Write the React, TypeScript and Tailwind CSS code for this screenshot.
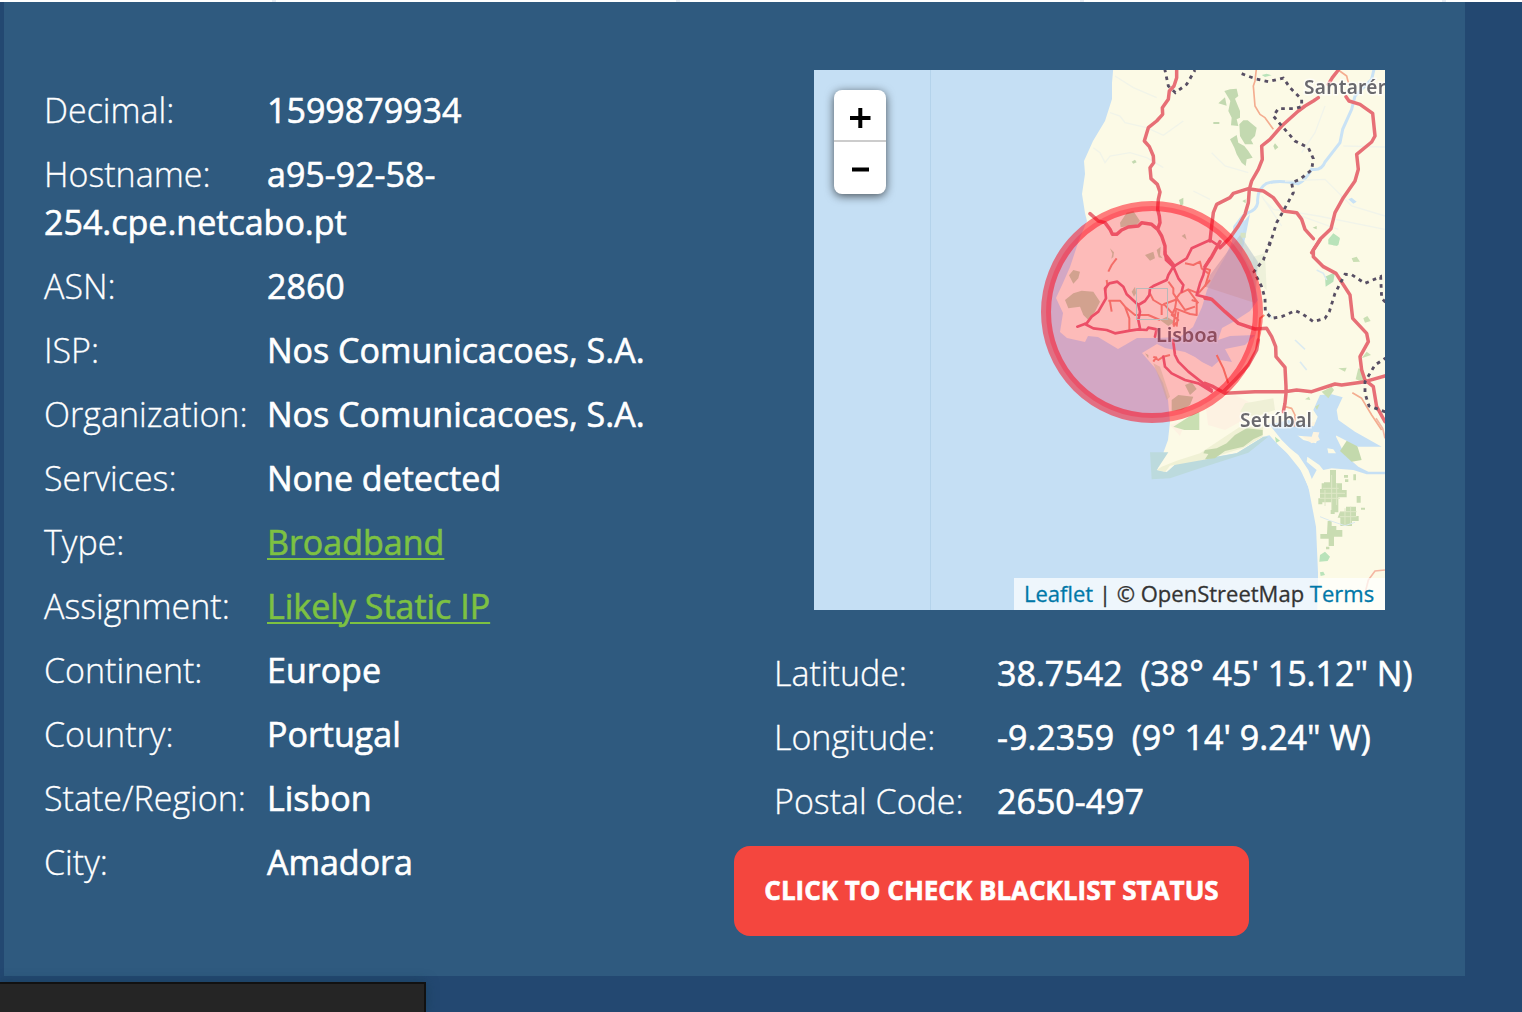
import React from "react";

type Row = { label: string; value: string; link?: boolean };

const details: Row[] = [
  { label: "Decimal:", value: "1599879934" },
  { label: "Hostname:", value: "a95-92-58-254.cpe.netcabo.pt" },
  { label: "ASN:", value: "2860" },
  { label: "ISP:", value: "Nos Comunicacoes, S.A." },
  { label: "Organization:", value: "Nos Comunicacoes, S.A." },
  { label: "Services:", value: "None detected" },
  { label: "Type:", value: "Broadband", link: true },
  { label: "Assignment:", value: "Likely Static IP", link: true },
  { label: "Continent:", value: "Europe" },
  { label: "Country:", value: "Portugal" },
  { label: "State/Region:", value: "Lisbon" },
  { label: "City:", value: "Amadora" },
];

const position: Row[] = [
  { label: "Latitude:", value: "38.7542\u00a0 (38° 45' 15.12\" N)" },
  { label: "Longitude:", value: "-9.2359\u00a0 (9° 14' 9.24\" W)" },
  { label: "Postal Code:", value: "2650-497" },
];

function InfoRow({ label, value, link }: Row) {
  return (
    <p className="mb-4 text-[34px] leading-[48px] text-white">
      <span className="inline-block w-[223px] font-light [-webkit-text-stroke:0.3px]">{label}</span>
      {link ? (
        <a className="font-medium text-[#7dc142] underline decoration-2 underline-offset-[3px] [-webkit-text-stroke:0.6px]">
          {value}
        </a>
      ) : (
        <span className="font-medium [-webkit-text-stroke:0.6px]">{value}</span>
      )}
    </p>
  );
}

/* Each group below is one map tile sector drawn at three times its displayed size. */
const NW = "translate(1030 66) scale(.33333)";
const NE = "translate(1205 66) scale(.33333)";
const SW = "translate(1030 240) scale(.33333)";
const SE = "translate(1205 240) scale(.33333)";
const SOUTH = "translate(1140 420) scale(.33333)";

function MapArt() {
  return (
    <svg className="block h-[540px] w-[571px]" viewBox="814 70 571 540">
      <rect x="814" y="70" width="571" height="540" fill="#c5dff4" />
      <path d="M930.500 70V610" stroke="#b4d3eb" />

      <g className="blur-[0.5px]">
        {/* Land */}
        <path
          fill="#fcfae6"
          d="M1114 60L1112 83L1112 99L1105 121L1093 141L1084 161L1085 174L1082 194L1085 213L1087 221L1079 240L1070 267L1063 283L1056 298L1063 313L1060 332L1067 338L1085 342L1088 336L1098 337L1118 349L1125 345L1137 338L1157 338L1180 337L1193 327L1202 307L1207 290L1212 280L1225 257L1238 229L1250 214L1246 234L1242 253L1253 273L1258 300L1250 311L1233 322L1222 328L1218 340L1230 336L1255 335L1245 345L1225 349L1232 362L1220 360L1212 367L1202 362L1195 357L1185 352L1165 348L1157 344L1142 353L1155 368L1163 383L1168 400L1170 422L1168 440L1157 470L1167 472L1177 463L1203 459L1237 453L1263 437L1270 435L1287 453L1303 473L1313 500L1318 533L1318 580L1317 620H1395V60Z"
        />
        {/* Built-up areas */}
        <path d="M1205 400L1235 395L1255 405L1247 418L1225 430L1208 425ZM1170 425L1186 420L1180 436ZM1296 424L1318 428L1325 443L1310 440Z" fill="#fdf2e2" />
        <g transform={SOUTH}>
          <path d="M30 97L85 97L50 150L80 157L110 130L190 118L290 100L370 50L385 50L325 98L180 145L90 175L35 178Z" fill="#bcdadd" />
          <path d="M180 100L300 20L370 20L368 50L310 84L200 118L90 137L75 156L50 150L65 140L110 122Z" fill="#f0f1d5" />
          <path d="M195 90L230 85L260 70L285 45L320 25L368 30L368 45L340 58L310 80L255 93L225 115L195 118L205 102L190 100Z" fill="#c3d6aa" />
          <path d="M385 10L440 20L490 60L528 70L545 15L570 0H596L588 50L615 105L655 140L685 155H750V163H680L640 150L575 145L550 150L538 135L502 110L500 125L530 150L514 180L495 145L470 105L425 60Z" fill="#c5dff4" />
          <path d="M385 42L400 36L430 70L475 105L505 150L540 240L550 320L545 480H535L528 320L505 200L470 125L415 75Z" fill="#fcfae6" />
          <path d="M460 20L510 8L555 0L545 20L525 30L540 60L515 70L490 52Z" fill="#fdf4df" />
          <path d="M562 85L580 88L588 100L565 100Z" fill="#fcfae6" />
          <path d="M625 55L648 65L665 120L635 125L600 93Z" fill="#c3d9ac" />
          <g fill="#c9dcb2">
            <path d="M570 150h18v40h18v20h14v22h-25v45h-20v-30h-35v-40h12v-20h18ZM600 275h18v-15h30v28h8v15h-20v15h-35v-25h-8ZM563 303h12v15h14v12h18v20h-25v28h-16v-22h-25v-14h20ZM612 165h12v8h-12ZM640 163h8v18h-8ZM615 178h10v8h-10ZM650 228h12v20h-12ZM663 263h12v6h-12ZM558 380h10v8h-10Z" />
            <path d="M545 190h15v20h-15ZM590 215h18v15h-18ZM535 235h12v18h-12ZM572 270h12v12h-12Z" />
          </g>
          <path d="M548 205h48M540 220h75M540 235h60M575 165v105M590 190v65M555 210v48M600 275h50M600 290h50M615 265v50M632 260v50" stroke="#dfe8c7" strokeWidth="3" />
          <path d="M540 405L555 395L570 410L563 423L538 425ZM540 457L550 455L555 465L542 468Z" fill="#b9e3ba" />
          <path d="M405 50l15 12-12 6" fill="#b9e3ba" />
          <path d="M708 -5L728 25L735 55M735 450L705 453L685 480L675 520" fill="none" stroke="#f4b7a3" strokeWidth="5" />
          <path d="M540 290l30 12 45 15 30-10" fill="none" stroke="#dbe9ef" strokeWidth="3" />
        </g>
        <g transform={SE}>
          <path d="M345 465L380 463L413 472L395 510L400 540L450 575L530 620L460 620L380 580L320 575L338 530L325 510Z" fill="#c5dff4" />
          <path d="M120 490L205 475L210 510L150 530L105 515Z" fill="#eff0d6" />
          <path d="M190 555L250 540L330 560L320 590L250 585Z" fill="#c5dff4" />
          <path d="M145 50L180 40L185 150L165 130L140 80Z" fill="#eef1da" />
          <path d="M360 110L390 97L385 125L362 140ZM370 0L405 -5L400 15L385 16Z" fill="#b8e1b8" />
          <path d="M350 455L380 440L387 450L370 475ZM470 355L485 335L498 345ZM452 418L460 385L475 390L480 428ZM400 385L425 383L420 395ZM440 55L455 50L465 65L445 66ZM475 235L487 228L497 243L480 248ZM300 478l12-8 4 10ZM330 500l14-8-8 18Z" fill="#cadfb4" />
          <path d="M335 90l20 10 10 20M270 300l30 28M285 365l20 25M190 215l10 20" fill="none" stroke="#dcebf1" strokeWidth="5" />
        </g>
        <g transform={SW}>
          <path d="M430 560l55-35 23-10v55h-45Z" fill="#c9dfb2" />
        </g>

        {/* Woods and streams */}
        <g transform={NE}>
          <path d="M58 75L75 70L95 68L100 90L90 98L105 135L105 155L95 160L100 180L78 178L80 155L70 135L76 105ZM40 112l20-18 5 25ZM103 175L115 163L128 163L155 185L150 210L138 222L145 235L120 235L105 210ZM75 220L95 207L100 230L118 240L130 255L143 275L125 280L122 300L110 290L95 265L88 245ZM25 168h18v6H25ZM205 240l5-8 10 12-10 8ZM323 485l12-5v10ZM112 405l10-5v12Z" fill="#c3d9b0" />
          <path d="M170 27l15-4 15 5-20 5ZM370 520L385 502L404 515L397 540L370 535Z" fill="#b9e3ba" />
          <path d="M90 490Q105 450 130 440Q155 430 158 410Q155 370 185 352Q220 340 280 353Q300 345 320 310Q350 315 360 288L405 230L413 190L440 130L450 90L500 40L508 5" fill="none" stroke="#c9e2f5" strokeWidth="9" />
          <path d="M85 480L105 455L120 465L105 540H80ZM430 400l10-5 15 12-10 6Z" fill="#c9e2f5" />
          <path d="M20 260L60 300L130 320M240 345L360 340L440 420L540 450M175 400L205 430L260 440L400 490M415 240L540 243M215 430L340 450L540 490M360 120l-30 80-40 60M170 390l60 90" fill="none" stroke="#f1f4ea" strokeWidth="4" />
          <path d="M107 500h15v15h-10v20h-10Z" fill="#d5e3c2" />
        </g>
        <g transform={NW} fill="none" stroke="#f1f4e9" strokeWidth="4">
          <path d="M240 140L270 150L285 170L350 185L400 208L460 165M190 245L210 260L225 290L240 270L300 260L350 275L400 305M255 30L310 65L380 95M490 375L540 400" />
          <path d="M305 287l10-6 5 8-10 4ZM447 402l13-7v20l-8 5ZM270 470l20-30 20-5 20 30-10 12-48 7ZM455 510l10-7 5 18Z" fill="#c3d9b0" stroke="none" />
        </g>
        <g transform={SW} fill="#c3d9ae">
          <path d="M130 90l20 5-5 20-15 16-13-25ZM105 180l25-20 25-8 35 3 20 30-15 30-20 25-15-15-10-25-35 5ZM240 25l12 12-2 14-6 5 3-15ZM345 45l25-10 5 20-15 7ZM380 30l12-10-2 25 8 10-12-3ZM390 240l20-10 25 15-20 13ZM305 155l10-15 3 20-6 10ZM345 340l10 5v10ZM425 480l20-15 45 5-10 25-25 15-30 3ZM465 435l20-8 15 20-20 18Z" />
          <path d="M370 370l20 10 30 90-10 10-15-45Z" opacity=".5" />
        </g>
        <path d="M1210 275L1240 235L1258 262L1255 303L1206 287Z" fill="#bfcbd0" opacity=".65" />

        {/* Secondary roads */}
        <g fill="none" stroke="#f4ad90" strokeWidth="5" strokeLinejoin="round">
          <g transform={NE}>
            <path d="M155 0L150 45L145 60L150 120L165 145L180 155L205 190M400 12L425 30L430 50" />
          </g>
          <g transform={SE}>
            <path d="M442 458L470 475L500 525L530 570M240 500L260 505L270 525L268 560" />
            <path d="M178 225L165 235L160 300M35 345L55 385L70 430M0 140L15 90L0 85" stroke="#f28b6e" strokeWidth="6" />
          </g>
          <g transform={SW} stroke="#f0927a" strokeWidth="6">
            <path d="M260 55L245 75L235 95M230 120L232 135L225 155M235 182L270 182L285 200L298 235L298 270M240 185L245 215M285 200L315 225L355 225L390 240M360 160L370 180L395 195L395 225M395 195L435 180L450 160L475 148L505 160L540 120M415 125L430 145L430 160L440 175L435 205L425 225L445 240L430 260M430 160L465 210L495 200M465 70L490 75L510 65L515 85L535 100M435 205L480 222L500 225V185L485 180M370 350L385 360L400 350L420 345M370 365L380 350M400 190L440 235M438 210L430 255M445 215L440 260M475 150L505 190" />
          </g>
        </g>

        {/* Motorways */}
        <g fill="none" stroke="#e76f76" strokeWidth="10.500" strokeLinejoin="round" strokeLinecap="round">
          <g transform={NW}>
            <path d="M440 0L440 35L432 60L418 75L415 100L397 125L398 145L380 165L355 185L343 225L358 242L370 270L371 290L360 305L363 338L382 355L390 378L385 400L383 430L388 450L390 470L383 490L395 510L405 540L405 565L433 600M180 443L205 465L225 470L240 490L247 505L260 505L275 492L295 483L325 480L335 470L365 475L383 490" />
          </g>
          <g transform={NE}>
            <path d="M400 12L382 35L370 55M340 95L325 105L300 120L280 135L230 180L195 220L170 240L172 280L160 310L140 345L133 370L130 410L120 445L100 480L75 515L45 545M15 525L20 480L25 440L35 415L75 395L85 382L130 368L175 375L205 395L235 435L275 440L290 460L300 490L325 518M423 92L432 105L465 115L503 142L510 210L500 228L455 265L460 310L450 345L415 395L390 440L378 488L345 520L320 560" />
          </g>
          <g transform={SW} stroke="#e66a78" strokeWidth="8">
            <path d="M405 35L408 60L430 80L445 115L460 135L455 155M430 80L415 105L410 120L370 138L360 145L358 165L345 183L325 195L290 163L280 140L262 125L238 130L225 145L228 175L205 215L185 230L170 250L142 260M165 252L190 265L230 270L255 280L300 272L325 268L350 270L355 263L380 268L375 290M325 195L330 215L325 240L330 265M430 80L470 55L485 25L540 0L570 20M540 55L525 80L520 105L510 130L500 165L540 175M429 300L435 345L445 365L475 395L545 450M400 350L405 380L425 400L465 420L505 430L545 455" />
          </g>
          <g transform={SE}>
            <path d="M0 175L20 178L60 215L100 250L150 267L185 265L200 290L212 320L213 350L240 382L243 440L243 460L240 490L235 515M0 430L25 440L60 460L150 455L240 455L275 450L320 455L390 432L410 435L480 425L550 405M160 300L155 330L130 375L90 420L55 455M345 0L325 30L325 50L355 80L393 100L435 165L443 235L485 280L490 305L465 350L470 390L480 420L505 440L515 500L540 545M0 80L20 50L45 5" />
          </g>
        </g>

        {/* District boundaries */}
        <g fill="none" stroke="#574e63" strokeWidth="8.500" strokeDasharray="11 13">
          <path transform={NW} d="M404 8L415 60L436 80L470 55L495 12" />
          <path transform={NE} d="M110 23L150 38L190 47L235 36L255 65L290 100V122L265 128L220 128L205 150L235 185L270 225L310 245L325 278L320 312L285 340L260 350L265 380L235 435L215 470L193 540" />
          <path transform={SE} d="M195 5L175 60L147 95L170 140L180 175L181 215L200 235L230 230L270 212L290 220L325 245L360 235L373 215L390 160L420 103L440 104L480 130L527 110L530 175L545 190M545 352L510 375L480 425L480 460L492 498L545 517" />
        </g>

        {/* Place names */}
        <g fontFamily="Noto Sans" fontWeight="600" fill="#6a696e" stroke="#ffffff" strokeOpacity=".65" strokeWidth="3" paintOrder="stroke">
          <text x="1304" y="94" fontSize="19" textLength="82">Santarér</text>
          <text x="1156" y="342" fontSize="20" textLength="62" strokeOpacity=".2">Lisboa</text>
          <text x="1240" y="427" fontSize="19" textLength="72">Setúbal</text>
        </g>
      </g>

      {/* Accuracy radius */}
      <circle cx="1152" cy="312" r="106" fill="#ff0033" fillOpacity=".25" />
      <circle cx="1152" cy="312" r="106" fill="none" stroke="#ff0011" strokeOpacity=".5" strokeWidth="10" />
      <rect x="1136.500" y="288.500" width="31" height="31" fill="none" stroke="#b9b9b9" />
    </svg>
  );
}

function LocationMap() {
  return (
    <div className="relative ml-20 h-[540px] w-[571px] overflow-hidden">
      <MapArt />
      <div className="absolute top-5 left-5 w-[52px] rounded-lg bg-white shadow-[0_2px_10px_rgba(0,0,0,0.65)]">
        <div className="flex h-[52px] items-center justify-center border-b-2 border-[#cccccc] pt-1.5">
          <svg className="h-[22px] w-[22px]" viewBox="0 0 22 22">
            <path d="M11.300 1V21M1 11H21.500" stroke="#000" strokeWidth="4" />
          </svg>
        </div>
        <div className="flex h-[52px] items-center justify-center pt-px">
          <svg className="h-[22px] w-[22px]" viewBox="0 0 22 22">
            <path d="M3 11.500H20" stroke="#000" strokeWidth="4" />
          </svg>
        </div>
      </div>
      <div className="absolute right-0 bottom-0 h-8 w-[371px] bg-white/70 pl-2.5 text-[22px] leading-[30px] whitespace-pre text-[#333333] [-webkit-text-stroke:0.3px]">
        <a className="text-[#0078a8]">Leaflet</a> | © OpenStreetMap <a className="text-[#0078a8]">Terms</a>
      </div>
    </div>
  );
}

export default function App() {
  return (
    <div className="flex h-[1012px] w-[1522px] flex-col overflow-hidden bg-[#234871] font-['Open_Sans',sans-serif]">
      <div className="flex h-0.5 shrink-0 gap-[400px] bg-white pl-[272px]">
        <span className="w-1 bg-[#e9edf3]" />
        <span className="w-1 bg-[#e9edf3]" />
        <span className="w-1 bg-[#e9edf3]" />
        <span className="-ml-[42px] w-1 bg-[#e9edf3]" />
      </div>
      <main className="ml-1 flex h-[974px] w-[1461px] shrink-0 bg-[#2f5a7f]">
        <section className="w-[730px] pt-[84px] pl-10">
          <div className="w-[610px]">
            {details.map((row) => (
              <InfoRow key={row.label} {...row} />
            ))}
          </div>
        </section>
        <section className="w-[731px] pt-[68px]">
          <LocationMap />
          <div className="mt-[39px] pl-10 whitespace-nowrap">
            {position.map((row) => (
              <InfoRow key={row.label} {...row} />
            ))}
          </div>
          <button className="mt-[21px] block h-[90px] w-[515px] rounded-2xl bg-[#f4463e] pb-0.5 text-[26px] font-bold whitespace-nowrap text-white [-webkit-text-stroke:0.6px]">
            CLICK TO CHECK BLACKLIST STATUS
          </button>
        </section>
      </main>
      <div className="mt-1.5 h-[30px] w-[426px] shrink-0 border-t-2 border-r-2 border-[#111111] bg-[#252525] shadow-[0_0_12px_rgba(20,60,80,0.6)]" />
    </div>
  );
}
